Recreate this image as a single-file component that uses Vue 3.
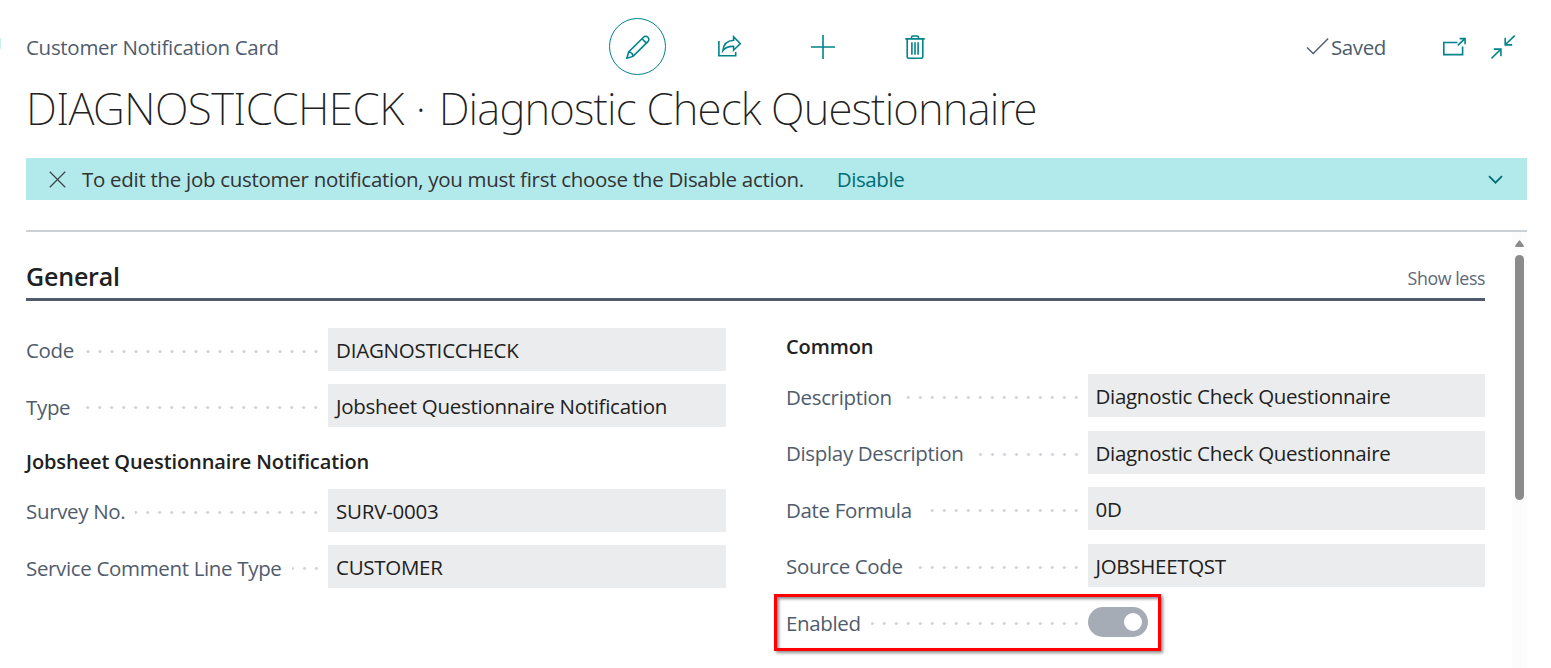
<script setup>
const groups = [
  {
    side: 'left',
    sections: [
      {
        title: '',
        fields: [
          { label: 'Code', value: 'DIAGNOSTICCHECK', caps: true },
          { label: 'Type', value: 'Jobsheet Questionnaire Notification' },
        ],
      },
      {
        title: 'Jobsheet Questionnaire Notification',
        fields: [
          { label: 'Survey No.', value: 'SURV-0003', caps: true },
          { label: 'Service Comment Line Type', value: 'CUSTOMER' },
        ],
      },
    ],
  },
  {
    side: 'right',
    sections: [
      {
        title: 'Common',
        fields: [
          { label: 'Description', value: 'Diagnostic Check Questionnaire' },
          { label: 'Display Description', value: 'Diagnostic Check Questionnaire' },
          { label: 'Date Formula', value: '0D' },
          { label: 'Source Code', value: 'JOBSHEETQST' },
          { label: 'Enabled', toggle: true },
        ],
      },
    ],
  },
]
</script>

<template>
  <div class="page">
    <i class="edge"></i>
    <header class="toolbar">
      <span class="crumb">Customer Notification Card</span>
      <button class="edit" aria-label="Edit">
        <svg class="icon" viewBox="0 0 24 24">
          <path d="M.8 23.2 2.7 17 17.5 2.2a3.1 3.1 0 0 1 4.4 0 3.1 3.1 0 0 1 0 4.4L7 21.4Z" />
          <path d="M2.7 17a4.8 4.8 0 0 1 4.3 4.4M16 3.7 20.4 8.1" />
        </svg>
      </button>
      <svg class="icon share" viewBox="0 0 24 24">
        <path d="M1.9 6v14.7h16.8V17" />
        <path d="M16.6 1.8 23.3 8.6 16.6 15.2V11.4C11 11.2 8.2 12.3 5.9 15.6 6.5 9.5 10.2 5.7 16.6 5.3Z" />
      </svg>
      <svg class="icon plus" viewBox="0 0 24 24"><path d="M12 0V24M0 12H24" /></svg>
      <svg class="icon trash" viewBox="0 0 24 24">
        <path d="M2.3 3.9H21.7M8.5 3.7V2.5A1.5 1.5 0 0 1 10 1h4a1.5 1.5 0 0 1 1.5 1.5V3.7M4.2 4V21.7A1.5 1.5 0 0 0 5.7 23.2H18.3A1.5 1.5 0 0 0 19.8 21.7V4" />
        <path d="M8.9 7.3V19.7M12 7.3V19.7M15.1 7.3V19.7" />
      </svg>
      <span class="saved">
        <svg class="check" viewBox="0 0 24 24"><path d="M1 12.6 7.2 18.6 22.2 3.6" /></svg>
        <span>Saved</span>
      </span>
      <svg class="icon popout" viewBox="0 0 24 24">
        <path d="M15.5 7.5H1.8V19.6H20.6V11.6M15.8 10.4 23 3.6M17.6 3.6H23.1V9.3" />
      </svg>
      <svg class="icon collapse" viewBox="0 0 24 24">
        <path d="M23.7.6 14.2 9.8M14.2 2.7V9.9H21.2M.4 23.4 9.8 14.2M2.8 14.1H9.9V21.3" />
      </svg>
    </header>

    <h1><span class="id">DIAGNOSTICCHECK</span> <span class="sep">·</span> Diagnostic Check Questionnaire</h1>

    <div class="banner">
      <svg class="close" viewBox="0 0 17 17"><path d="M.8.8 16.2 16.2M16.2.8.8 16.2" /></svg>
      <span class="message">To edit the job customer notification, you must first choose the Disable action.</span>
      <a>Disable</a>
      <svg class="chevron" viewBox="0 0 15 9"><path d="M1 1.2 7.5 7.7 14 1.2" /></svg>
    </div>

    <main class="content">
      <section class="tab">
        <div class="tab-head">
          <h2>General</h2>
          <span class="less">Show less</span>
        </div>
        <div class="columns">
          <div v-for="g in groups" :key="g.side" class="column" :class="g.side">
            <div v-for="s in g.sections" :key="s.title" class="section">
              <h3 v-if="s.title">{{ s.title }}</h3>
              <div class="fields">
                <div v-for="f in s.fields" :key="f.label" class="field" :class="{ marked: f.toggle }">
                  <div class="label"><span>{{ f.label }}</span><i class="dots"></i></div>
                  <div v-if="f.toggle" class="toggle"><i></i></div>
                  <div v-else class="value" :class="{ caps: f.caps }">{{ f.value }}</div>
                </div>
              </div>
            </div>
          </div>
        </div>
      </section>
      <div class="scroll">
        <svg viewBox="0 0 9 7"><path d="M3.6.9Q4.5-.5 5.4.9L8.7 5.6Q9.2 7 8 7H1Q-.2 7 .3 5.6Z" /></svg>
        <i class="thumb"></i>
      </div>
    </main>
  </div>
</template>

<style>
body { background: #fff; overflow: hidden; }
</style>

<style scoped>
.page {
  position: relative;
  box-sizing: border-box;
  width: 1551px;
  height: 668px;
  overflow: hidden;
  padding: 0 24px 0 26px;
  display: flex;
  flex-direction: column;
  font: 400 20.5px/28px "Open Sans", "Noto Sans", sans-serif;
  letter-spacing: -0.3px;
  color: #212121;
}
.edge { position: absolute; left: 0; top: 38px; width: 1px; height: 11px; background: #c9f0f3; }
h1, h2, h3 { margin: 0; }
svg { display: block; flex: none; fill: none; }
.toolbar { display: flex; align-items: center; height: 57px; margin-top: 18px; padding-right: 12px; }
.icon { width: 24px; height: 24px; stroke: #00838a; stroke-width: 1.6; }
.crumb { width: 583px; color: #505c6d; line-height: 28px; padding-top: 1px; }
.edit {
  box-sizing: border-box;
  width: 57px;
  height: 57px;
  padding: 0;
  border: 1.2px solid #00838a;
  border-radius: 50%;
  background: none;
  display: flex;
  align-items: center;
  justify-content: center;
}
.share { margin-left: 51px; }
.plus { margin-left: 70px; }
.trash { margin-left: 68px; }
.saved { display: flex; align-items: center; margin-left: auto; color: #505c6d; }
.saved span { width: 57px; margin-left: 1px; padding-top: 1px; letter-spacing: -0.4px; }
.check { width: 24px; height: 24px; margin-left: -1px; stroke: #505c6d; stroke-width: 1.4; }
.popout { margin-left: 54px; }
.collapse { margin-left: 25px; }
h1 {
  height: 60px;
  margin-top: 3px;
  font: 200 44px/60px "Noto Sans", "Open Sans", sans-serif;
  letter-spacing: -0.84px;
  white-space: nowrap;
}
h1 .id { letter-spacing: -0.57px; }
h1 .sep { margin: 0 3px 0 1.5px; }
.banner {
  display: flex;
  align-items: center;
  height: 42px;
  margin-top: 20px;
  padding: 0 24px 0 23px;
  background: #b2e9eb;
  flex: none;
  box-sizing: border-box;
}
.close { width: 17px; height: 17px; stroke: #3c4a4c; stroke-width: 1.3; }
.message { margin-left: 16px; color: #333; white-space: nowrap; letter-spacing: -0.29px; }
.banner a { margin-left: 33px; color: #006d75; letter-spacing: -0.42px; }
.chevron { width: 15px; height: 9px; margin-left: auto; stroke: #006d75; stroke-width: 1.7; }
.content { display: flex; justify-content: space-between; margin-top: 30px; border-top: 2px solid #ccd1d6; flex: 1; min-height: 0; }
.tab { width: 1459px; }
.tab-head {
  display: flex;
  align-items: center;
  justify-content: space-between;
  box-sizing: border-box;
  height: 69px;
  padding-top: 22px;
  border-bottom: 3px solid #505c6d;
}
h2 { font-size: 25px; font-weight: 600; line-height: 34px; letter-spacing: -0.18px; }
.less { font-size: 17.8px; color: #5d6878; padding-top: 3px; letter-spacing: -0.42px; }
.columns { display: grid; grid-template-columns: 700px 699px; column-gap: 60px; }
.left { padding-top: 26.8px; }
.right { padding-top: 31.2px; }
h3 { height: 28px; font-size: 20px; line-height: 28px; font-weight: 600; letter-spacing: -0.1px; }
.right h3 { line-height: 29px; }
.left .section + .section { padding-top: 20.5px; }
.left h3 + .fields { margin-top: 13.2px; }
.right h3 + .fields { margin-top: 14px; }
.fields { display: flex; flex-direction: column; gap: 13.5px; }
.field { display: flex; align-items: center; height: 43px; position: relative; }
.label { display: flex; align-items: center; width: 296px; margin-right: 6px; color: #505c6d; white-space: nowrap; padding-top: 2px; letter-spacing: -0.34px; }
.dots {
  flex: 1;
  height: 5px;
  margin: 2px 0 0 10px;
  background: radial-gradient(circle, #d0d3d8 1.3px, transparent 1.8px) right center / 12px 5px repeat-x;
}
.value { box-sizing: border-box; flex: 1; height: 43px; padding: 3px 8px 0; line-height: 39.6px; background: #ebeced; letter-spacing: -0.28px; }
.right .value { padding-left: 7.5px; letter-spacing: -0.3px; }
.value.caps { letter-spacing: -0.22px; }
.toggle { position: relative; box-sizing: border-box; width: 60px; height: 30px; padding: 6px; border-radius: 15px; background: #a6acb6; display: flex; justify-content: flex-end; }
.toggle i { width: 18px; height: 18px; border-radius: 50%; background: #fff; }
.marked::after {
  content: "";
  position: absolute;
  left: -12px;
  top: -6px;
  width: 381px;
  height: 51px;
  border: 3px solid #f00;
  box-shadow: 2px 2px 3px rgba(0, 0, 0, 0.45), inset 2px 2px 3px rgba(0, 0, 0, 0.45);
}
.scroll { display: flex; flex-direction: column; align-items: center; width: 15px; background: #fcfcfc; }
.scroll svg { width: 9px; height: 7px; margin-top: 8px; fill: #8b8b8b; }
.thumb { width: 9px; height: 245px; margin-top: 8px; border-radius: 5px; background: #8b8b8b; }
</style>
